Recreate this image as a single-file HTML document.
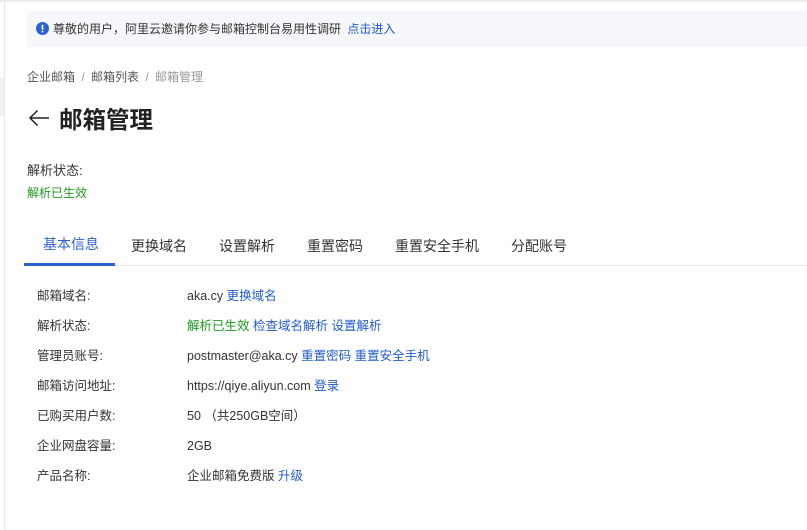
<!DOCTYPE html>
<html><head><meta charset="utf-8"><style>
*{margin:0;padding:0;box-sizing:border-box}
body{width:807px;height:530px;background:#fff;position:relative;overflow:hidden;font-family:"Liberation Sans","Noto Sans CJK SC",sans-serif;color:#333;font-size:12px}
.a{position:absolute;white-space:nowrap;line-height:16px}
.r{font-size:12.5px}
.blue{color:#1f5bd0}
.green{color:#1e9a1e}
</style></head><body>
<div class="a" style="left:0;top:0;width:807px;height:3px;background:linear-gradient(#e6e6e6,#fff)"></div>
<div class="a" style="left:4px;top:0;width:1px;height:530px;background:#e8e8e8"></div>
<div class="a" style="left:0;top:78px;width:4px;height:38px;background:#eef0f4"></div>
<div class="a" style="left:27px;top:11px;width:780px;height:36px;background:#f5f7fa"></div>
<svg class="a" style="left:36px;top:22px" width="13" height="13" viewBox="0 0 13 13"><circle cx="6.5" cy="6.5" r="6.5" fill="#2a62d6"/><rect x="5.7" y="2.8" width="1.6" height="5" fill="#fff"/><rect x="5.7" y="8.8" width="1.6" height="1.6" fill="#fff"/></svg>
<div class="a" style="left:53px;top:21px;font-size:12px;color:#333">尊敬的用户，阿里云邀请你参与邮箱控制台易用性调研 <span class="blue" style="margin-left:3px">点击进入</span></div>
<div class="a" style="left:27px;top:69px;color:#555">企业邮箱 <span style="color:#999;margin:0 3px">/</span> 邮箱列表 <span style="color:#999;margin:0 3px">/</span> <span style="color:#999">邮箱管理</span></div>
<svg class="a" style="left:28px;top:109px" width="22" height="18" viewBox="0 0 22 18"><path d="M21 9H2M9.5 1.5L2 9l7.5 7.5" stroke="#222" stroke-width="1.5" fill="none"/></svg>
<div class="a" style="left:59px;top:106px;font-size:23.5px;line-height:28px;font-weight:bold;color:#222">邮箱管理</div>
<div class="a" style="left:27px;top:163px;font-size:13px">解析状态:</div>
<div class="a green" style="left:27px;top:185px">解析已生效</div>
<div class="a" style="left:24px;top:265px;width:783px;height:1px;background:#e6e6e6"></div>
<div class="a" style="left:24px;top:263px;width:91px;height:3px;background:#2a62d6"></div>
<div class="a" style="left:43px;top:236px;font-size:14px;color:#2a62d6">基本信息</div>
<div class="a" style="left:131px;top:238px;font-size:14px">更换域名</div>
<div class="a" style="left:219px;top:238px;font-size:14px">设置解析</div>
<div class="a" style="left:307px;top:238px;font-size:14px">重置密码</div>
<div class="a" style="left:395px;top:238px;font-size:14px">重置安全手机</div>
<div class="a" style="left:511px;top:238px;font-size:14px">分配账号</div>
<div class="a r" style="left:37px;top:288px">邮箱域名:</div>
<div class="a r" style="left:187px;top:288px">aka.cy <span class="blue">更换域名</span></div>
<div class="a r" style="left:37px;top:318px">解析状态:</div>
<div class="a r" style="left:187px;top:318px"><span class="green">解析已生效</span> <span class="blue">检查域名解析</span> <span class="blue">设置解析</span></div>
<div class="a r" style="left:37px;top:348px">管理员账号:</div>
<div class="a r" style="left:187px;top:348px">postmaster@aka.cy <span class="blue">重置密码</span> <span class="blue">重置安全手机</span></div>
<div class="a r" style="left:37px;top:378px">邮箱访问地址:</div>
<div class="a r" style="left:187px;top:378px">https://qiye.aliyun.com <span class="blue">登录</span></div>
<div class="a r" style="left:37px;top:408px">已购买用户数:</div>
<div class="a r" style="left:187px;top:408px">50 （共250GB空间）</div>
<div class="a r" style="left:37px;top:438px">企业网盘容量:</div>
<div class="a r" style="left:187px;top:438px">2GB</div>
<div class="a r" style="left:37px;top:468px">产品名称:</div>
<div class="a r" style="left:187px;top:468px">企业邮箱免费版 <span class="blue">升级</span></div>
</body></html>
